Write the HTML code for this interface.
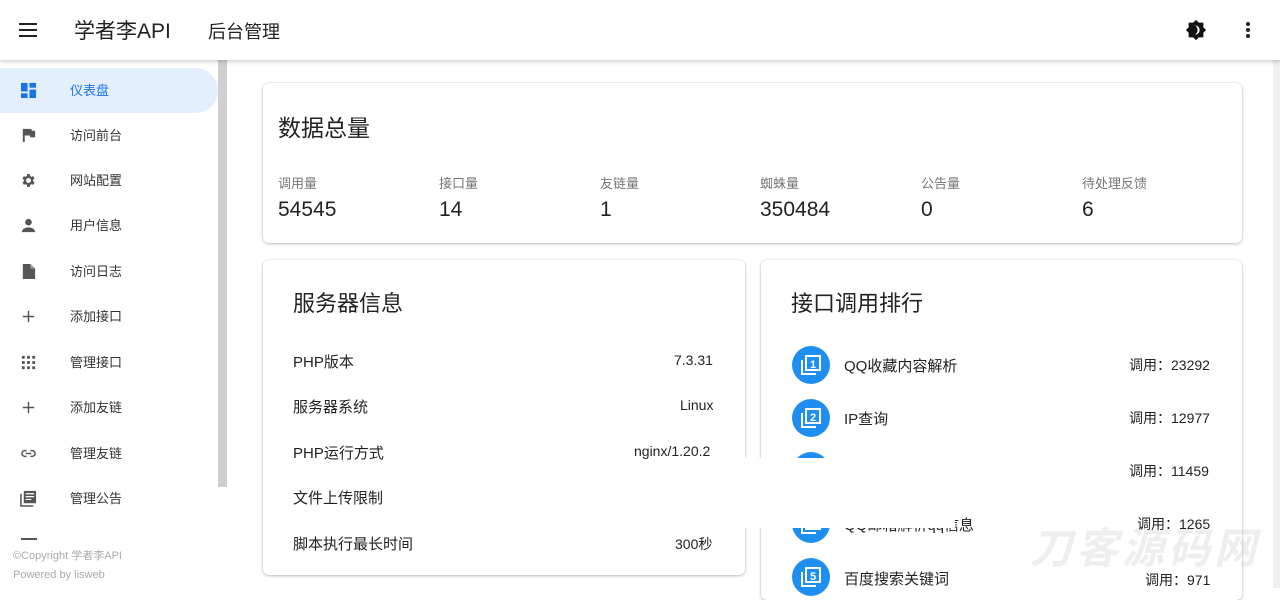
<!DOCTYPE html>
<html><head><meta charset="utf-8"><style>
*{box-sizing:border-box;margin:0;padding:0}
body{width:1280px;height:588px;overflow:hidden;background:#fff;font-family:"Liberation Sans","Noto Sans CJK SC",sans-serif;color:#222;position:relative}
.top{position:absolute;left:0;top:0;width:1280px;height:60px;background:#fff;box-shadow:0 2px 4px rgba(0,0,0,.18);z-index:5}
.side{position:absolute;left:0;top:60px;width:218px;height:528px}
.sb{position:absolute;left:218px;top:60px;width:9px;height:427px;background:#cfcfcf}
.item{position:absolute;left:0;width:218px;height:45px;font-size:13px;color:#333}
.item .ic{position:absolute;left:20px;top:14px;width:17px;height:17px}
.item span{position:absolute;left:70px;top:12px}
.act{background:#e3effd;border-radius:0 23px 23px 0;color:#1a73e8}
.card{position:absolute;background:#fff;border-radius:6px;box-shadow:0 1px 3px rgba(0,0,0,.25),0 0 1px rgba(0,0,0,.2)}
.lbl{position:absolute;font-size:13px;color:#777}
.val{position:absolute;font-size:21px;color:#222}
.row{position:absolute;font-size:15px;color:#222}
.circ{position:absolute;left:792px;width:38px;height:38px;border-radius:50%;background:#1e8ff0}
.circ svg{position:absolute;left:9px;top:9px}
</style></head><body>
<div class="top">
 <svg style="position:absolute;left:19px;top:23px" width="18" height="14"><rect y="0" width="18" height="2" fill="#222"/><rect y="6" width="18" height="2" fill="#222"/><rect y="12" width="18" height="2" fill="#222"/></svg>
 <div style="position:absolute;left:74px;top:15px;font-size:21px;color:#222">学者李API</div>
 <div style="position:absolute;left:208px;top:18px;font-size:18px;color:#222">后台管理</div>
 <svg style="position:absolute;left:1185px;top:19px" width="22" height="22" viewBox="0 0 24 24"><path d="M12 1l3 3h5v5l3 3-3 3v5h-5l-3 3-3-3H4v-5l-3-3 3-3V4h5z" fill="#111"/><path d="M11 7a5 5 0 0 1 0 10a6 6 0 0 0 0-10z" fill="#fff"/></svg>
 <svg style="position:absolute;left:1245px;top:21px" width="6" height="18"><circle cx="3" cy="3" r="2" fill="#222"/><circle cx="3" cy="9" r="2" fill="#222"/><circle cx="3" cy="15" r="2" fill="#222"/></svg>
</div>
<div class="side">
 <div class="item act" style="top:8px"><svg class="ic" viewBox="0 0 18 18"><rect x="1" y="1" width="7" height="9" fill="#1a73e8"/><rect x="10" y="1" width="7" height="5" fill="#1a73e8"/><rect x="1" y="12" width="7" height="5" fill="#1a73e8"/><rect x="10" y="8" width="7" height="9" fill="#1a73e8"/></svg><span>仪表盘</span></div>
 <div class="item" style="top:53px"><svg class="ic" viewBox="0 0 18 18"><path d="M3 2h9l.5 2H16v7h-5l-.5-2H5v7H3z" fill="#555"/></svg><span>访问前台</span></div>
 <div class="item" style="top:98px"><svg class="ic" viewBox="0 0 24 24"><path d="M19.4 13a7.5 7.5 0 0 0 0-2l2.1-1.6-2-3.5-2.5 1a7 7 0 0 0-1.7-1L15 3h-4l-.4 2.9a7 7 0 0 0-1.7 1l-2.5-1-2 3.5L6.6 11a7.5 7.5 0 0 0 0 2l-2.1 1.6 2 3.5 2.5-1a7 7 0 0 0 1.7 1L11 21h4l.4-2.9a7 7 0 0 0 1.7-1l2.5 1 2-3.5zM13 15.5a3.5 3.5 0 1 1 0-7 3.5 3.5 0 0 1 0 7z" fill="#555" transform="translate(-1 0)"/></svg><span>网站配置</span></div>
 <div class="item" style="top:143px"><svg class="ic" viewBox="0 0 18 18"><circle cx="9" cy="5.5" r="3.5" fill="#555"/><path d="M2 16c0-3.5 4-5 7-5s7 1.5 7 5z" fill="#555"/></svg><span>用户信息</span></div>
 <div class="item" style="top:189px"><svg class="ic" viewBox="0 0 18 18"><path d="M3 1h8l5 5v11H3z" fill="#555"/><path d="M11 1v5h5" fill="#999"/></svg><span>访问日志</span></div>
 <div class="item" style="top:234px"><svg class="ic" viewBox="0 0 18 18"><path d="M9 3v12M3 9h12" stroke="#555" stroke-width="1.5"/></svg><span>添加接口</span></div>
 <div class="item" style="top:280px"><svg class="ic" viewBox="0 0 18 18" fill="#555"><rect x="2" y="2" width="3" height="3"/><rect x="7.5" y="2" width="3" height="3"/><rect x="13" y="2" width="3" height="3"/><rect x="2" y="7.5" width="3" height="3"/><rect x="7.5" y="7.5" width="3" height="3"/><rect x="13" y="7.5" width="3" height="3"/><rect x="2" y="13" width="3" height="3"/><rect x="7.5" y="13" width="3" height="3"/><rect x="13" y="13" width="3" height="3"/></svg><span>管理接口</span></div>
 <div class="item" style="top:325px"><svg class="ic" viewBox="0 0 18 18"><path d="M9 3v12M3 9h12" stroke="#555" stroke-width="1.5"/></svg><span>添加友链</span></div>
 <div class="item" style="top:371px"><svg class="ic" viewBox="0 0 18 18"><path d="M7 6H5a3 3 0 0 0 0 6h2M11 6h2a3 3 0 0 1 0 6h-2M6 9h6" stroke="#555" stroke-width="1.6" fill="none"/></svg><span>管理友链</span></div>
 <div class="item" style="top:416px"><svg class="ic" viewBox="0 0 18 18"><path d="M1 4v13h13" stroke="#555" stroke-width="1.6" fill="none"/><rect x="4" y="1" width="13" height="13" fill="#555"/><path d="M6 4h9M6 7h9M6 10h6" stroke="#fff" stroke-width="1.3"/></svg><span>管理公告</span></div>
 <div style="position:absolute;left:21px;top:478px;width:16px;height:1.5px;background:#555"></div>
 <div style="position:absolute;left:13px;top:487px;font-size:11px;color:#aaa;line-height:19px;background:#fff;width:200px">©Copyright 学者李API<br>Powered by lisweb</div>
</div>
<div class="sb"></div>
<div style="position:absolute;left:1273px;top:60px;width:7px;height:528px;background:#f0f0f0"></div>

<div class="card" style="left:263px;top:83px;width:979px;height:160px">
 <div style="position:absolute;left:15px;top:26px;font-size:23px">数据总量</div>
 <div class="lbl" style="left:15px;top:90px">调用量</div><div class="val" style="left:15px;top:115px">54545</div>
 <div class="lbl" style="left:176px;top:90px">接口量</div><div class="val" style="left:176px;top:115px">14</div>
 <div class="lbl" style="left:337px;top:90px">友链量</div><div class="val" style="left:337px;top:115px">1</div>
 <div class="lbl" style="left:497px;top:90px">蜘蛛量</div><div class="val" style="left:497px;top:115px">350484</div>
 <div class="lbl" style="left:658px;top:90px">公告量</div><div class="val" style="left:658px;top:115px">0</div>
 <div class="lbl" style="left:819px;top:90px">待处理反馈</div><div class="val" style="left:819px;top:115px">6</div>
</div>

<div class="card" style="left:263px;top:260px;width:482px;height:315px">
 <div style="position:absolute;left:30px;top:26px;font-size:22px">服务器信息</div>
</div>
<div class="row" style="left:293px;top:351px">PHP版本</div><div class="row" style="left:674px;top:352px;font-size:14px">7.3.31</div>
<div class="row" style="left:293px;top:396px">服务器系统</div><div class="row" style="left:680px;top:397px;font-size:14px">Linux</div>
<div class="row" style="left:293px;top:442px">PHP运行方式</div><div class="row" style="left:634px;top:443px;font-size:14px">nginx/1.20.2</div>
<div class="row" style="left:293px;top:487px">文件上传限制</div>
<div class="row" style="left:293px;top:533px">脚本执行最长时间</div><div class="row" style="left:675px;top:534px;font-size:14px">300秒</div>

<div class="card" style="left:761px;top:260px;width:481px;height:340px">
 <div style="position:absolute;left:30px;top:26px;font-size:22px">接口调用排行</div>
</div>
<div class="circ" style="top:346px"><svg width="20" height="20" viewBox="0 0 20 20"><path d="M1 5v14h14" stroke="#fff" stroke-width="2" fill="none"/><rect x="5" y="1" width="14" height="14" stroke="#fff" stroke-width="2" fill="none"/><text x="12" y="13" font-size="11" font-weight="bold" fill="#fff" text-anchor="middle" font-family="Liberation Sans">1</text></svg></div>
<div class="row" style="left:844px;top:355px">QQ收藏内容解析</div><div class="row" style="left:1129px;top:355px;font-size:14px">调用：23292</div>
<div class="circ" style="top:399px"><svg width="20" height="20" viewBox="0 0 20 20"><path d="M1 5v14h14" stroke="#fff" stroke-width="2" fill="none"/><rect x="5" y="1" width="14" height="14" stroke="#fff" stroke-width="2" fill="none"/><text x="12" y="13" font-size="11" font-weight="bold" fill="#fff" text-anchor="middle" font-family="Liberation Sans">2</text></svg></div>
<div class="row" style="left:844px;top:408px">IP查询</div><div class="row" style="left:1129px;top:408px;font-size:14px">调用：12977</div>
<div class="circ" style="top:452px"></div>
<div class="row" style="left:1129px;top:461px;font-size:14px">调用：11459</div>
<div class="circ" style="top:505px"><svg width="20" height="20" viewBox="0 0 20 20"><path d="M1 5v14h14" stroke="#fff" stroke-width="2" fill="none"/><rect x="5" y="1" width="14" height="14" stroke="#fff" stroke-width="2" fill="none"/></svg></div>
<div class="row" style="left:844px;top:514px">QQ邮箱解析qq信息</div><div class="row" style="left:1137px;top:514px;font-size:14px">调用：1265</div>
<div class="circ" style="top:558px"><svg width="20" height="20" viewBox="0 0 20 20"><path d="M1 5v14h14" stroke="#fff" stroke-width="2" fill="none"/><rect x="5" y="1" width="14" height="14" stroke="#fff" stroke-width="2" fill="none"/><text x="12" y="13" font-size="11" font-weight="bold" fill="#fff" text-anchor="middle" font-family="Liberation Sans">5</text></svg></div>
<div class="row" style="left:844px;top:568px">百度搜索关键词</div><div class="row" style="left:1145px;top:570px;font-size:14px">调用：971</div>
<div style="position:absolute;left:715px;top:458px;width:240px;height:70px;background:#fff"></div>
<div style="position:absolute;left:1030px;top:515px;font-size:42px;font-weight:bold;font-style:italic;color:rgba(200,200,200,.3);letter-spacing:4px">刀客源码网</div>
</body></html>
